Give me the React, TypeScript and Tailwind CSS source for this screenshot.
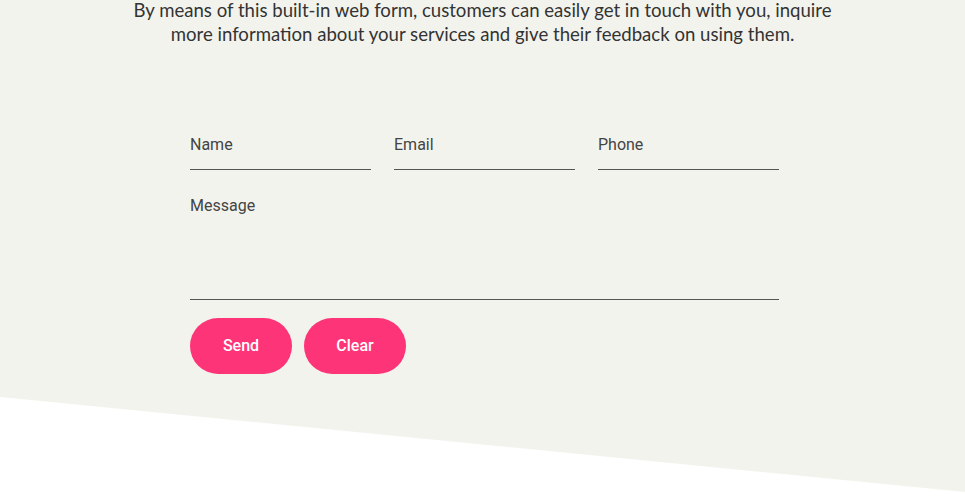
import React from "react";

const fieldCls =
  "w-full h-[51px] bg-transparent border-b border-[#555] outline-none text-[16px] text-[#333] placeholder:text-[#444] font-['Roboto',sans-serif]";

const btnCls =
  "h-[56px] w-[102px] rounded-full bg-[#fe3479] text-white text-[16px] font-medium font-['Roboto',Arial,sans-serif]";

export default function App() {
  return (
    <div className="min-h-[500px] bg-white">
      <section className="flow-root h-[500px] bg-[#f3f3ee] [clip-path:polygon(0_0,100%_0,100%_98.4%,0_79.4%)]">
        {/* Intro copy */}
        <p className="mx-auto -mt-[2px] w-[730px] text-center text-[18.6px] leading-[24px] text-[#333] font-['Lato','Open_Sans',sans-serif]">
          By means of this built-in web form, customers can easily get in touch with you, inquire more
          information about your services and give their feedback on using them.
        </p>

        {/* Form */}
        <form className="ml-[190px] mt-[73px] w-[589px]" onSubmit={(e) => e.preventDefault()}>
          <div className="grid grid-cols-3 gap-x-[23px]">
            <input className={fieldCls} placeholder="Name" />
            <input className={fieldCls} placeholder="Email" />
            <input className={fieldCls} placeholder="Phone" />
          </div>
          <textarea
            className="mt-[11px] block w-full h-[119px] resize-none bg-transparent border-b border-[#555] outline-none pt-[13px] text-[16px] leading-[24px] text-[#333] placeholder:text-[#444] font-['Roboto',sans-serif]"
            placeholder="Message"
          />
          <div className="mt-[18px] flex gap-[12px]">
            <button className={btnCls}>Send</button>
            <button type="button" className={btnCls}>
              Clear
            </button>
          </div>
        </form>
      </section>
    </div>
  );
}
